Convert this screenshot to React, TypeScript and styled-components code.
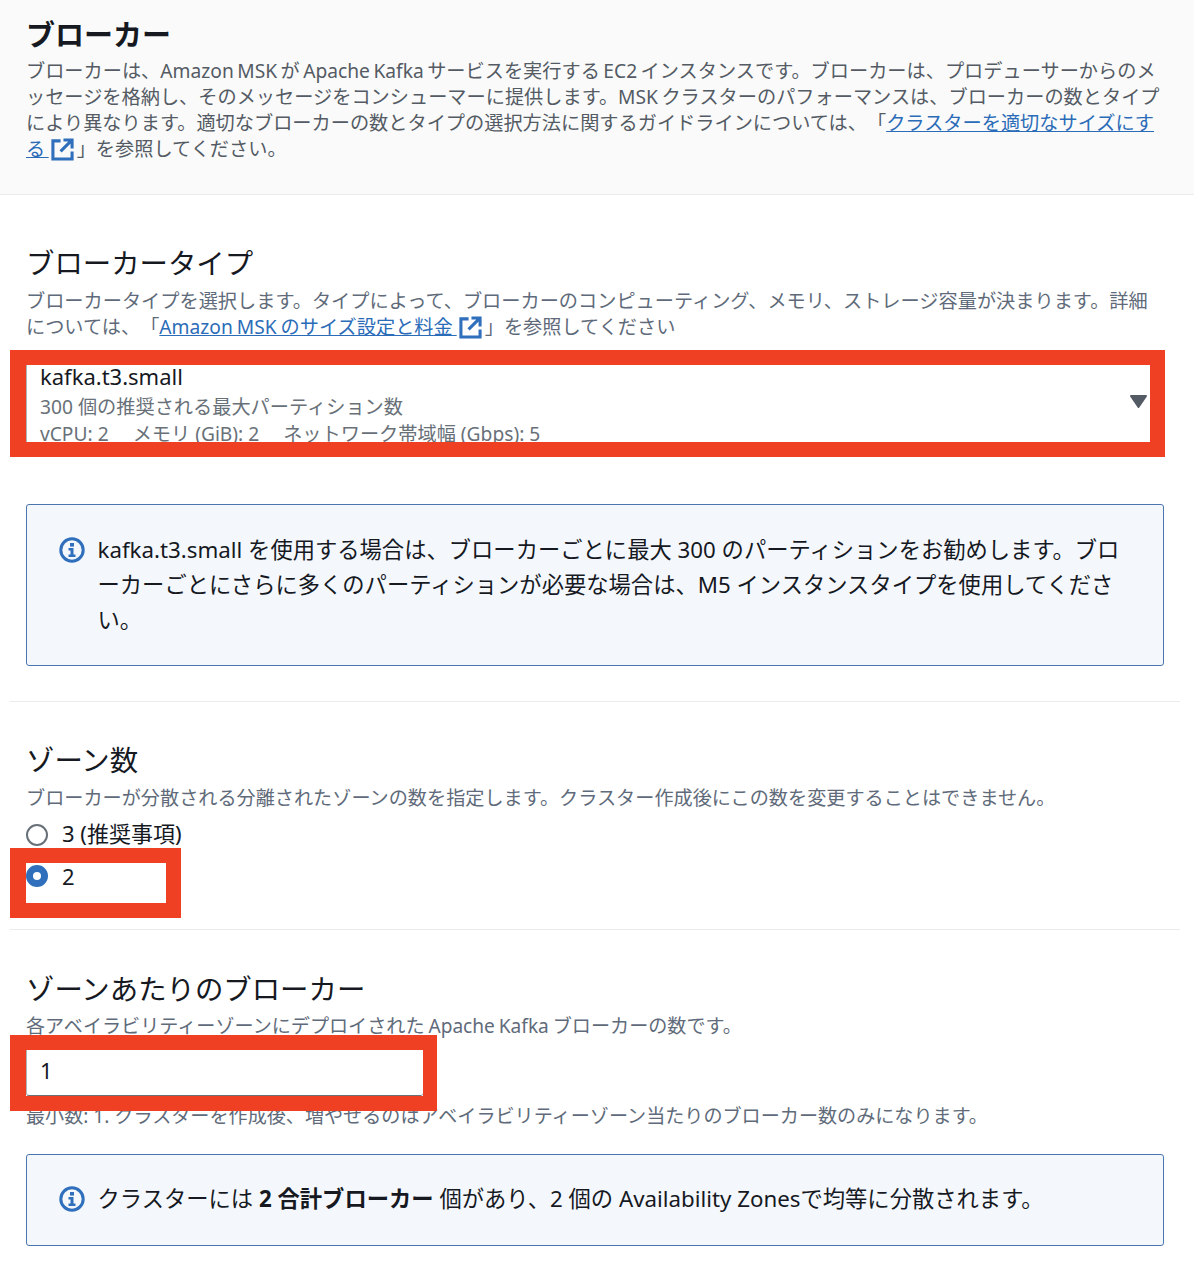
import React from 'react';
import styled, { createGlobalStyle } from 'styled-components';

const GlobalStyle = createGlobalStyle`
  html, body {
    margin: 0;
    padding: 0;
    background: #ffffff;
  }
  body {
    font-family: "Noto Sans", "Noto Sans CJK JP", sans-serif;
    color: #16191f;
    text-spacing-trim: space-all;
  }
`;

const Page = styled.div`
  width: 1194px;
  height: 1278px;
  overflow: hidden;
`;

const Header = styled.header`
  height: 195px;
  box-sizing: border-box;
  padding: 16px 26px 0;
  background: #fafafa;
  border-bottom: 1px solid #e9ebed;
`;

const HeaderTitle = styled.h2`
  margin: 0 0 4px;
  font-size: 29px;
  line-height: 38px;
  font-weight: 700;
`;

const Description = styled.p`
  margin: 0;
  font-size: 19.2px;
  line-height: 26px;
  word-spacing: -1px;
  color: #5f6b7a;
  white-space: nowrap;
`;

const HeaderDescription = styled(Description)`
  color: #545b64;
  word-spacing: -1.5px;
`;

const DocLink = styled.a`
  color: #2b6cb8;
  text-decoration: underline;
`;

const IconSvg = styled.svg`
  display: inline-block;
  width: 23px;
  height: 23px;
  margin: -4px 3px -4px 2px;
  vertical-align: -1px;
`;

const ExternalIcon = () => (
  <IconSvg viewBox="0 0 24 24" fill="none" stroke="#2f6fbb" strokeWidth="3.2">
    <path d="M10 3H2v19h20v-8" />
    <path d="M13 2h9v9M22 2L10 14" />
  </IconSvg>
);

const Section = styled.section`
  margin: 0 14px 0 10px;
  padding: 0 0 0 16px;
  border-top: 1px solid #e9ebed;
`;

const ZoneCountSection = styled(Section)`
  margin-top: 35px;
`;

const PerZoneSection = styled(Section)`
  margin-top: 11px;
`;

const BrokerTypeSection = styled.section`
  padding: 49px 30px 0 10px;
`;

const SectionTitle = styled.h3`
  margin: 0;
  font-size: 28.4px;
  line-height: 38px;
  font-weight: 400;
`;

const BrokerTypeIntro = styled.div`
  padding-left: 16px;

  ${SectionTitle} {
    margin-bottom: 6px;
  }
`;

const Marked = styled.div<{ $width: number; $height: number }>`
  position: relative;
  z-index: 1;
  width: ${(p) => p.$width}px;
  height: ${(p) => p.$height}px;
  box-sizing: border-box;
  border: solid #f04024;
  border-width: 15px 15px 15px 16px;
  background: #ffffff;
  overflow: hidden;
`;

const SelectBox = styled(Marked)`
  margin-top: 10px;
  padding: 0 0 0 14px;

  &::before {
    content: '';
    position: absolute;
    left: 0;
    top: 0;
    bottom: 0;
    border-left: 1px solid #aab7b8;
  }
`;

const SelectLabel = styled.div`
  margin: -1px 0 5px;
  font-size: 22px;
  line-height: 24px;
`;

const SelectSub = styled.div`
  font-size: 19.2px;
  line-height: 27px;
  color: #687078;
  white-space: nowrap;
`;

const SelectMeta = styled(SelectSub)`
  display: flex;
  gap: 24px;
`;

const Caret = styled.svg`
  position: absolute;
  right: 3px;
  top: 29px;
  width: 17px;
  height: 14px;
`;

const Alert = styled.div<{ $height: number }>`
  display: flex;
  gap: 12.5px;
  height: ${(p) => p.$height}px;
  box-sizing: border-box;
  margin: 0 30px 0 26px;
  padding: 27px 32px 0 32px;
  background: #f4f8fd;
  border: 1px solid #4a76b0;
  border-radius: 3px;
  font-size: 22.3px;
  line-height: 35px;
  white-space: nowrap;
`;

const FirstAlert = styled(Alert)`
  margin-top: 47px;
`;

const LastAlert = styled(Alert)`
  margin-top: 25px;
  padding-top: 26px;
`;

const InfoSvg = styled.svg`
  flex: none;
  width: 26px;
  height: 26px;
  margin-top: 5px;
`;

const InfoIcon = () => (
  <InfoSvg viewBox="0 0 26 26">
    <circle cx="13" cy="13" r="11.2" fill="none" stroke="#2f6fbb" strokeWidth="3" />
    <rect x="11" y="6" width="4" height="3.6" fill="#2f6fbb" />
    <path d="M9.500 11h5v6.500h2V20h-7v-2.500h2v-4h-2z" fill="#2f6fbb" />
  </InfoSvg>
);

const ZoneTitle = styled(SectionTitle)`
  padding-top: 39px;
`;

const PerZoneTitle = styled(SectionTitle)`
  padding-top: 40px;
`;

const ZoneDescription = styled(Description)`
  margin-top: 6px;
  font-size: 19.15px;
`;

const PerZoneDescription = styled(ZoneDescription)`
  margin-top: 5px;
  font-size: 19.1px;
`;

const RadioRow = styled.div`
  display: flex;
  align-items: center;
  gap: 14px;
  height: 36px;
  margin-top: 3px;
  font-size: 22px;
`;

const RadioDot = styled.span<{ $checked?: boolean }>`
  flex: none;
  box-sizing: border-box;
  width: 22px;
  height: 22px;
  border-radius: 50%;
  border: ${(p) => (p.$checked ? '7px solid #2f6fbb' : '2px solid #687078')};
  background: #ffffff;
`;

const UncheckedDot = styled(RadioDot)`
  margin-top: 6px;
`;

const RadioBox = styled(Marked)`
  margin: -2px 0 0 -16px;
  font-size: 22px;
  line-height: 26px;
`;

const CheckedRow = styled.div`
  display: flex;
  align-items: flex-start;
  gap: 14px;
`;

const CheckedDot = styled(RadioDot)`
  margin-top: 2px;
`;

const NumberBox = styled(Marked)`
  margin: -4px 0 0 -16px;
  border-right-width: 14px;
  padding: 5px 0 0 14px;
  font-size: 22px;
  line-height: 30px;
`;

const NumberEdge = styled.div`
  position: absolute;
  inset: 0;
  border-bottom: 1px solid #687078;
  border-left: 1px solid #aab7b8;
  border-radius: 0 0 3px 3px;
`;

const Hint = styled(Description)`
  margin-top: -8px;
  font-size: 19.1px;
  word-spacing: 0;
`;

const App = () => {
  return (
    <Page>
      <GlobalStyle />
      <Header>
        <HeaderTitle>ブローカー</HeaderTitle>
        <HeaderDescription>
          ブローカーは、Amazon MSK が Apache Kafka サービスを実行する EC2 インスタンスです。ブローカーは、プロデューサーからのメ
          <br />
          ッセージを格納し、そのメッセージをコンシューマーに提供します。MSK クラスターのパフォーマンスは、ブローカーの数とタイプ
          <br />
          により異なります。適切なブローカーの数とタイプの選択方法に関するガイドラインについては、「
          <DocLink>クラスターを適切なサイズにす</DocLink>
          <br />
          <DocLink>る </DocLink>
          <ExternalIcon />」を参照してください。
        </HeaderDescription>
      </Header>

      <BrokerTypeSection>
        <BrokerTypeIntro>
          <SectionTitle>ブローカータイプ</SectionTitle>
          <Description>
            ブローカータイプを選択します。タイプによって、ブローカーのコンピューティング、メモリ、ストレージ容量が決まります。詳細
            <br />
            については、「<DocLink>Amazon MSK のサイズ設定と料金 </DocLink>
            <ExternalIcon />」を参照してください
          </Description>
        </BrokerTypeIntro>
        <SelectBox $width={1155} $height={107}>
          <SelectLabel>kafka.t3.small</SelectLabel>
          <SelectSub>300 個の推奨される最大パーティション数</SelectSub>
          <SelectMeta>
            <span>vCPU: 2</span>
            <span>メモリ (GiB): 2</span>
            <span>ネットワーク帯域幅 (Gbps): 5</span>
          </SelectMeta>
          <Caret viewBox="0 0 17 14">
            <path d="M1 2h15L8.500 13z" fill="#545b64" stroke="#545b64" strokeWidth="2" strokeLinejoin="round" />
          </Caret>
        </SelectBox>
      </BrokerTypeSection>

      <FirstAlert $height={162}>
        <InfoIcon />
        <div>
          kafka.t3.small を使用する場合は、ブローカーごとに最大 300 のパーティションをお勧めします。ブロ
          <br />
          ーカーごとにさらに多くのパーティションが必要な場合は、M5 インスタンスタイプを使用してくださ
          <br />
          い。
        </div>
      </FirstAlert>

      <ZoneCountSection>
        <ZoneTitle>ゾーン数</ZoneTitle>
        <ZoneDescription>
          ブローカーが分散される分離されたゾーンの数を指定します。クラスター作成後にこの数を変更することはできません。
        </ZoneDescription>
        <RadioRow>
          <UncheckedDot />3 (推奨事項)
        </RadioRow>
        <RadioBox $width={171} $height={70}>
          <CheckedRow>
            <CheckedDot $checked />2
          </CheckedRow>
        </RadioBox>
      </ZoneCountSection>

      <PerZoneSection>
        <PerZoneTitle>ゾーンあたりのブローカー</PerZoneTitle>
        <PerZoneDescription>
          各アベイラビリティーゾーンにデプロイされた Apache Kafka ブローカーの数です。
        </PerZoneDescription>
        <NumberBox $width={427} $height={76}>
          <NumberEdge />1
        </NumberBox>
        <Hint>最小数: 1. クラスターを作成後、増やせるのはアベイラビリティーゾーン当たりのブローカー数のみになります。</Hint>
      </PerZoneSection>

      <LastAlert $height={92}>
        <InfoIcon />
        <div>
          クラスターには <b>2 合計ブローカー</b> 個があり、2 個の Availability Zonesで均等に分散されます。
        </div>
      </LastAlert>
    </Page>
  );
};

export default App;
